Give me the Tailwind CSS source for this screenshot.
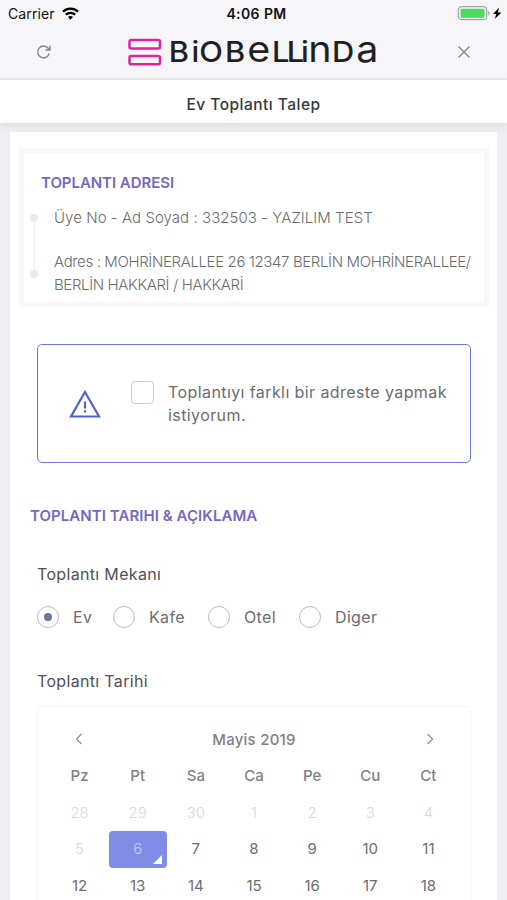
<!DOCTYPE html>
<html lang="tr">
<head>
<meta charset="utf-8">
<title>Ev Toplantı Talep</title>
<script src="https://cdn.jsdelivr.net/npm/@tailwindcss/browser@4"></script>
</head>
<body class="w-[507px] h-[900px] overflow-hidden bg-[#eeeef3] font-['Inter','Noto_Sans',sans-serif] text-[15px] text-[#6b6c70]">
<div class="flex flex-col h-[900px] overflow-hidden">
  <header class="h-20 shrink-0 bg-[#f6f6f8] border-b-2 border-[#ebebed]">
    <div class="flex h-[27px] items-center justify-between pl-2 pr-1 text-[#111]">
      <div class="flex w-[120px] items-center gap-[7px]"><span class="text-[14px] tracking-[0.1px]">Carrier</span>
        <svg class="w-[17px] h-[13px]" viewBox="0 0 17 13" fill="none" stroke="#000" stroke-width="2.3"><path d="M1 4.7a10.8 10.8 0 0 1 15 0M3.8 7.7a6.8 6.8 0 0 1 9.4 0"/><path d="M8.5 12.7 6 10.1a3.7 3.7 0 0 1 5 0z" fill="#000" stroke="none"/></svg>
      </div>
      <span class="pl-[2px] text-[14px] font-semibold tracking-[0.4px]">4:06 PM</span>
      <div class="flex w-[120px] justify-end">
        <svg class="w-11 h-4 overflow-visible" viewBox="0.500 1 44 16"><rect x="-.2" y="1.7" width="28.4" height="13" rx="3.5" fill="#f6f6f8" stroke="#a5a5a8" stroke-width="1.2"/><rect x="2" y="3.7" width="24" height="9" rx="1.3" fill="#4cd964"/><path d="M29.7 6v4.500c2-.7 2-3.800 0-4.500" fill="#a5a5a8"/><path d="m40.400 2.700-5.800 6.400h3.200l-1.600 5L43 7.500h-3.500z" fill="#000"/></svg>
      </div>
    </div>
    <div class="flex h-[50px] items-center px-9">
      <svg class="w-4 h-4" viewBox="0 0 16 16" fill="none" stroke="#858587" stroke-width="1.4"><path d="M13.300 9.500A5.900 5.900 0 1 1 12.300 4.300L14 6M14 1.500V6H9.500"/></svg>
      <svg class="ml-[75px] w-[255px] h-[50px] overflow-visible" viewBox="127 27 255 50" role="img" aria-label="BioBellinda">
        <g fill="none" stroke="#dc249b" stroke-width="2.500"><rect x="129.500" y="40" width="30.500" height="8.600" rx="1.800"/><rect x="129.500" y="55.900" width="30.500" height="8.400" rx="1.800"/></g>
        <g fill="#221f22" font-family="Inter" font-size="28.500" font-weight="500" transform="scale(1.08 1)"><text y="62.500" x="156.300 177.300 184.600 208.300 228.900 251.900 265.600 278.700 285.400 307.500 329.800">BiOB<tspan font-size="36.500" font-weight="400">e</tspan>LLi<tspan font-size="36.500" font-weight="400">n</tspan>D<tspan font-size="36.500" font-weight="400">a</tspan></text></g>
      </svg>
      <svg class="ml-auto mr-0 w-[14px] h-[14px]" viewBox="0 0 14 14" stroke="#858587" stroke-width="1.400"><path d="m1.500 1.500 11 11m0-11-11 11"/></svg>
    </div>
  </header>
  <div class="flex h-[43px] shrink-0 items-center justify-center bg-white pt-[6px] text-[15.500px] tracking-[0.480px] font-medium text-[#38383a] shadow-[0_2px_7px_#d8d8dc]">Ev Toplantı Talep</div>
  <main class="mx-[10px] mt-[9px] h-[900px] shrink-0 bg-white px-[9px] pt-4">
    <section class="flex h-[159px] w-[470px] flex-col border-[5px] border-[#f8f8f9] pl-[6px] pt-[18px]">
      <h2 class="ml-[11px] h-6 leading-6 text-[15px] font-semibold tracking-[-0.050px] text-[#7568c4]"><span>TOPLANTI ADRESI</span></h2>
      <div class="mt-[11px] flex gap-[17px]">
        <div class="flex w-[7px] flex-col items-center pt-[8px]"><i class="h-2 w-2 shrink-0 rounded-full bg-[#e9eaec]"></i><i class="h-12 w-[2px] bg-[#f2f2f4]"></i><i class="h-2 w-2 shrink-0 rounded-full bg-[#e9eaec]"></i></div>
        <div class="whitespace-nowrap font-light leading-[23px]">
          <p class="tracking-[0.050px]">Üye No - Ad Soyad : 332503 - YAZILIM TEST</p>
          <p class="mt-[21px] tracking-[-0.370px]">Adres : MOHRİNERALLEE 26 12347 BERLİN MOHRİNERALLEE/<br>BERLİN HAKKARİ / HAKKARİ</p>
        </div>
      </div>
    </section>
    <section class="ml-[18px] mt-[37px] flex h-[119px] w-[434px] rounded-[5px] border border-[#6f78d8] pl-[30px] pt-[36px]">
      <svg class="mt-[8px] h-[30px] w-[34px]" viewBox="0 0 34 30" fill="none" stroke="#5361d5" stroke-width="2.200"><path d="M17 3 31 27.500H3z"/><path d="M17 12.500v7m0 1.800v2.200"/></svg>
      <i class="ml-[29px] h-[23px] w-[23px] rounded-[4px] border border-[#c9cad8]"></i>
      <p class="ml-[14px] whitespace-nowrap text-[16px] tracking-[0.410px] leading-[23px]">Toplantıyı farklı bir adreste yapmak<br>istiyorum.</p>
    </section>
    <h2 class="ml-[11px] mt-[41px] h-6 leading-6 text-[15px] font-semibold tracking-[0.060px] text-[#7568c4]">TOPLANTI TARIHI &amp; AÇIKLAMA</h2>
    <h3 class="ml-[18px] mt-[34px] h-6 leading-6 text-[16px] tracking-[0.330px] text-[#505154]">Toplantı Mekanı</h3>
    <div class="ml-[18px] mt-[19px] flex h-6 items-center whitespace-nowrap text-[16px] tracking-[0.350px]">
      <div class="flex w-[76px] items-center gap-[14px]"><i class="flex h-[22px] w-[22px] items-center justify-center rounded-full border border-[#b9bdcd]"><i class="h-2 w-2 rounded-full bg-[#6b769f]"></i></i>Ev</div>
      <div class="flex w-[95px] items-center gap-[14px]"><i class="h-[22px] w-[22px] rounded-full border border-[#b9bdcd]"></i>Kafe</div>
      <div class="flex w-[91px] items-center gap-[14px]"><i class="h-[22px] w-[22px] rounded-full border border-[#b9bdcd]"></i>Otel</div>
      <div class="flex items-center gap-[14px]"><i class="h-[22px] w-[22px] rounded-full border border-[#b9bdcd]"></i>Diger</div>
    </div>
    <h3 class="ml-[18px] mt-[40px] h-6 leading-6 text-[16px] tracking-[0.330px] text-[#505154]">Toplantı Tarihi</h3>
    <section class="ml-[18px] mt-[13px] h-[300px] w-[434px] rounded-[5px] border border-[#f5f5f6] px-[12.500px] pt-[17px]">
      <div class="flex h-[30px] items-center justify-between px-[23px] font-medium tracking-[0.250px] text-[#808186]">
        <svg class="h-3 w-[10px]" viewBox="0 0 10 12" fill="none" stroke="#909196" stroke-width="1.300"><path d="M7.500 1 2.500 6l5 5"/></svg><span class="pt-[2px]">Mayis 2019</span>
        <svg class="h-3 w-[10px]" viewBox="0 0 10 12" fill="none" stroke="#909196" stroke-width="1.300"><path d="m2.500 1 5 5-5 5"/></svg>
      </div>
      <div class="mt-[4px] grid grid-cols-7 auto-rows-[36.700px] items-center text-center">
        <b class="font-medium text-[#808186]">Pz</b><b class="font-medium text-[#808186]">Pt</b><b class="font-medium text-[#808186]">Sa</b><b class="font-medium text-[#808186]">Ca</b><b class="font-medium text-[#808186]">Pe</b><b class="font-medium text-[#808186]">Cu</b><b class="font-medium text-[#808186]">Ct</b>
        <span class="font-light text-[#d8d9db]">28</span><span class="font-light text-[#d8d9db]">29</span><span class="font-light text-[#d8d9db]">30</span><span class="font-light text-[#d8d9db]">1</span><span class="font-light text-[#d8d9db]">2</span><span class="font-light text-[#d8d9db]">3</span><span class="font-light text-[#d8d9db]">4</span>
        <span class="font-light text-[#d8d9db]">5</span><span class="relative flex h-full items-center justify-center rounded-[4px] bg-[#818ce4] font-light text-[#c4caef]">6<svg class="absolute bottom-[4px] right-[5px] h-[9px] w-[9px]" viewBox="0 0 9 9" fill="#fff"><path d="M9 0v9H0z"/></svg></span><span>7</span><span>8</span><span>9</span><span>10</span><span>11</span>
        <span>12</span><span>13</span><span>14</span><span>15</span><span>16</span><span>17</span><span>18</span>
      </div>
    </section>
  </main>
</div>
</body>
</html>
